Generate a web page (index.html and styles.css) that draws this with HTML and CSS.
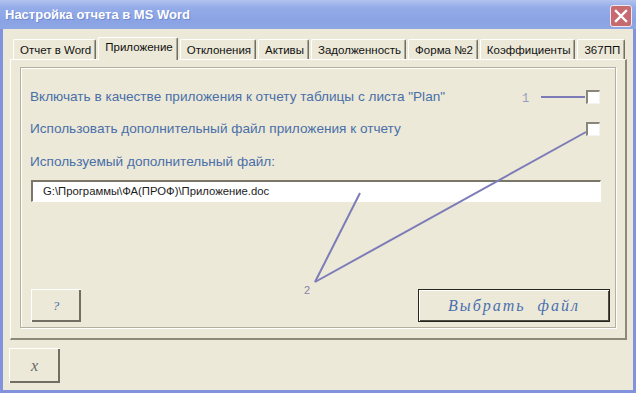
FILE: index.html
```html
<!DOCTYPE html>
<html lang="ru">
<head>
  <meta charset="UTF-8">
  <title>Настройка отчета в MS Word</title>
  <link rel="stylesheet" href="styles.css">
</head>
<body>
  <div class="window">
    <div class="titlebar">
      <span class="title">Настройка отчета в MS Word</span>
      <span class="close">
        <svg width="14" height="14" viewBox="0 0 14 14"><path d="M2 2L12 12M12 2L2 12" stroke="#fff" stroke-width="2.4" stroke-linecap="square"/></svg>
      </span>
    </div>

    <div class="main">
      <div class="tabs">
        <div class="tab">Отчет в Word</div>
        <div class="tab active">Приложение</div>
        <div class="tab">Отклонения</div>
        <div class="tab">Активы</div>
        <div class="tab">Задолженность</div>
        <div class="tab">Форма №2</div>
        <div class="tab">Коэффициенты</div>
        <div class="tab">367ПП</div>
      </div>

      <div class="page">
        <div class="group">
          <div class="row first">
            <span class="label">Включать в качестве приложения к отчету таблицы с листа "Plan"</span>
            <span class="check"></span>
          </div>
          <div class="row second">
            <span class="label">Использовать дополнительный файл приложения к отчету</span>
            <span class="check"></span>
          </div>
          <div class="label caption">Используемый дополнительный файл:</div>
          <div class="field">G:\Программы\ФА(ПРОФ)\Приложение.doc</div>
          <div class="actions">
            <button class="btn btn-help">?</button>
            <button class="btn btn-pick">Выбрать  файл</button>
          </div>
        </div>
      </div>

      <div class="footer">
        <button class="btn btn-exit">x</button>
      </div>
    </div>

    <!-- выноски 1 и 2 поверх формы -->
    <svg class="callouts" width="636" height="393" viewBox="0 0 636 393">
      <g stroke="#7d7cb8" stroke-width="2" fill="none">
        <path d="M541 97H585"/>
        <path d="M315 282L360 193"/>
        <path d="M315 282L586 132"/>
      </g>
      <text x="522" y="102" class="mark">1</text>
      <text x="304" y="294" class="mark mark-2">2</text>
    </svg>
  </div>
</body>
</html>
```

FILE: styles.css
```css
body {
  margin: 0;
  font-family: 'Liberation Sans', Arial, sans-serif;
}
.window {
  position: relative;
  width: 636px;
  height: 393px;
  display: flex;
  flex-direction: column;
  background-color: #ece9d8;
}
.titlebar {
  height: 29px;
  display: flex;
  justify-content: space-between;
  align-items: center;
  padding: 0 4px 0 5px;
  background: linear-gradient(#b3c3ee 0, #94ace8 25%, #8aa3e4 70%, #8ea6e4 100%);
}
.title {
  color: #fff;
  font-weight: bold;
  font-size: 13px;
  text-shadow: 1px 1px 0 #7289cf;
}
.close {
  align-self: flex-start;
  margin-top: 5px;
  width: 20px;
  height: 20px;
  display: flex;
  align-items: center;
  justify-content: center;
  background-color: #c66a70;
  border: 1px solid #f3e9ec;
  border-radius: 3px;
}
.main {
  flex: 1;
  display: flex;
  flex-direction: column;
  border: 3px solid #8293de;
  border-top: none;
  padding: 8px 6px 0 7px;
}
.tabs {
  display: flex;
  align-items: flex-end;
  gap: 2px;
  padding-left: 3px;
  margin-bottom: -1px;
  position: relative;
  z-index: 1;
}
.tab {
  height: 19px;
  margin-bottom: 1px;
  padding: 0 4px 0 6px;
  font-size: 11.5px;
  line-height: 21px;
  white-space: nowrap;
  color: #111;
  border-top: 1px solid #fff;
  border-left: 1px solid #fff;
  border-right: 1px solid #716f64;
  box-shadow: inset -1px 0 0 #aca899;
  border-radius: 2px 2px 0 0;
}
.tab.active {
  height: 22px;
  margin-bottom: 0;
  line-height: 18px;
  background-color: #ece9d8;
}
.page {
  flex: 1;
  display: flex;
  border-top: 1px solid #fff;
  border-left: 1px solid #fff;
  border-right: 2px solid #8c8979;
  border-bottom: 2px solid #8c8979;
}
.group {
  flex: 1;
  display: flex;
  flex-direction: column;
  margin: 7px 9px 10px 9px;
  padding: 19px 5px 5px 9px;
  border: 1px solid #b3b09f;
  box-shadow: inset 1px 1px 0 #fff, 1px 1px 0 #fff;
}
.label {
  color: #4a6fa8;
  font-size: 13.6px;
  line-height: 20px;
}
.row {
  display: flex;
  align-items: center;
  margin-right: 10px;
}
.row .label {
  flex: 1;
}
.row.second {
  margin-top: 12px;
}
.caption {
  margin-top: 13px;
}
.check {
  width: 11px;
  height: 11px;
  background-color: #fff;
  border-top: 2px solid #8a877a;
  border-left: 2px solid #8a877a;
  border-right: 1px solid #f4f3ee;
  border-bottom: 1px solid #f4f3ee;
}
.field {
  margin: 8px 9px 0 1px;
  height: 19px;
  padding-left: 10px;
  background-color: #fff;
  border-top: 2px solid #7a7668;
  border-left: 2px solid #7a7668;
  border-right: 1px solid #fff;
  border-bottom: 1px solid #fff;
  font-size: 11.3px;
  line-height: 19px;
  color: #1c1c1c;
}
.actions {
  margin-top: auto;
  display: flex;
  justify-content: space-between;
  padding-left: 1px;
}
.btn {
  background-color: #ece9d8;
  border: none;
  padding: 0;
  font-family: 'Liberation Serif', 'Times New Roman', serif;
  font-style: italic;
  box-shadow: inset 1px 1px 0 #fff, inset -2px -2px 0 #716f64;
  cursor: pointer;
}
.btn-help {
  width: 50px;
  height: 33px;
  font-size: 13px;
  color: #4a6fa8;
}
.btn-pick {
  width: 192px;
  height: 33px;
  font-size: 16px;
  letter-spacing: 2px;
  color: #4a6fb0;
  white-space: pre;
  border: 1px solid #27261f;
  box-shadow: inset 1px 1px 0 #fff, inset -1px -1px 0 #4d4b42;
}
.footer {
  height: 50px;
  padding-top: 8px;
  box-sizing: border-box;
}
.btn-exit {
  width: 51px;
  height: 35px;
  margin-left: -1px;
  font-size: 16px;
  color: #666;
}
.callouts {
  position: absolute;
  top: 0;
  left: 0;
  pointer-events: none;
}
.mark {
  font-family: 'Liberation Mono', monospace;
  font-size: 12px;
  fill: #9a9ac0;
}
.mark-2 {
  font-family: 'Liberation Sans', sans-serif;
  font-size: 11px;
  fill: #8585a6;
}
```
